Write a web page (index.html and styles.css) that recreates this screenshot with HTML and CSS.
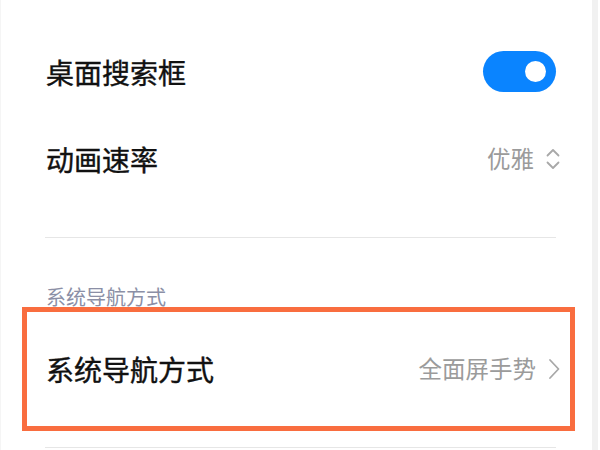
FILE: index.html
```html
<!DOCTYPE html>
<html lang="zh-CN">
    <head>
        <meta charset="UTF-8" />
        <meta name="viewport" content="width=device-width, initial-scale=1.0" />
        <title>桌面设置</title>

        <link rel="stylesheet" href="styles.css">
    </head>
    <body>
        <main class="settings">
            <div class="row">
                <span class="row-title">桌面搜索框</span>
                <span class="switch switch-on"><span class="switch-knob"></span></span>
            </div>
            <div class="row">
                <span class="row-title">动画速率</span>
                <span class="row-value">
                    优雅
                    <svg class="icon-updown" width="14" height="26" viewBox="0 0 14 26">
                        <path d="M1.5 9.5 L7 4 L12.5 9.5 M1.5 16.5 L7 22 L12.5 16.5" />
                    </svg>
                </span>
            </div>

            <div class="divider divider-first"></div>

            <h2 class="section-title">系统导航方式</h2>

            <div class="row row-highlight">
                <span class="row-title">系统导航方式</span>
                <span class="row-value">
                    全面屏手势
                    <svg class="icon-next" width="12" height="22" viewBox="0 0 12 22">
                        <path d="M2 2 L10.5 11 L2 20" />
                    </svg>
                </span>
            </div>

            <div class="divider divider-last"></div>
        </main>
    </body>
</html>
```

FILE: styles.css
```css
* {
    margin: 0;
    padding: 0;
    box-sizing: border-box;
}
html {
    font-family: "Noto Sans CJK SC", "Noto Sans", sans-serif;
}
body {
    background: #fff;
    height: 450px;
    overflow: hidden;
}
.settings {
    position: relative;
    height: 450px;
    padding: 28px 40px 0 45px;
    border-left: 1px solid #f5f5f5;
}
/* the faint scroll strip on the right edge */
.settings::after {
    content: "";
    position: absolute;
    top: 0;
    right: 2px;
    width: 6px;
    height: 100%;
    background: #f1f1f1;
}
.row {
    display: flex;
    align-items: center;
    justify-content: space-between;
    height: 87px;
}
.row-title {
    font-size: 28px;
    font-weight: 400;
    color: #111;
    line-height: 1;
    -webkit-text-stroke: 0.4px #111;
}
.row-value {
    display: flex;
    align-items: center;
    gap: 12px;
    font-size: 23.5px;
    color: #9b9b9b;
    line-height: 1;
}
.row-value svg path {
    fill: none;
    stroke: #a8a8a8;
    stroke-width: 1.8;
    stroke-linecap: round;
    stroke-linejoin: round;
}
.switch {
    position: relative;
    width: 73px;
    height: 41px;
    margin-right: 4px;
    border-radius: 21px;
    background: #d9d9d9;
}
.switch-on {
    background: #0a84ff;
}
.switch-knob {
    position: absolute;
    top: 10px;
    right: 10px;
    width: 21px;
    height: 21px;
    border-radius: 50%;
    background: #fff;
}
.divider {
    height: 1px;
    margin-right: 4px;
    margin-left: -1px;
    background: #e6e6e6;
}
.divider-first {
    margin-top: 35px;
}
.divider-last {
    margin-top: 16px;
}
.section-title {
    margin-top: 49px;
    font-size: 20px;
    font-weight: 400;
    line-height: 20px;
    color: #8b8fa6;
}
.row-highlight {
    height: 124px;
    margin: 0 -15px 0 -24px;
    padding: 0 10px 0 19px;
    border: 5px solid #f96d3f;
}
```
